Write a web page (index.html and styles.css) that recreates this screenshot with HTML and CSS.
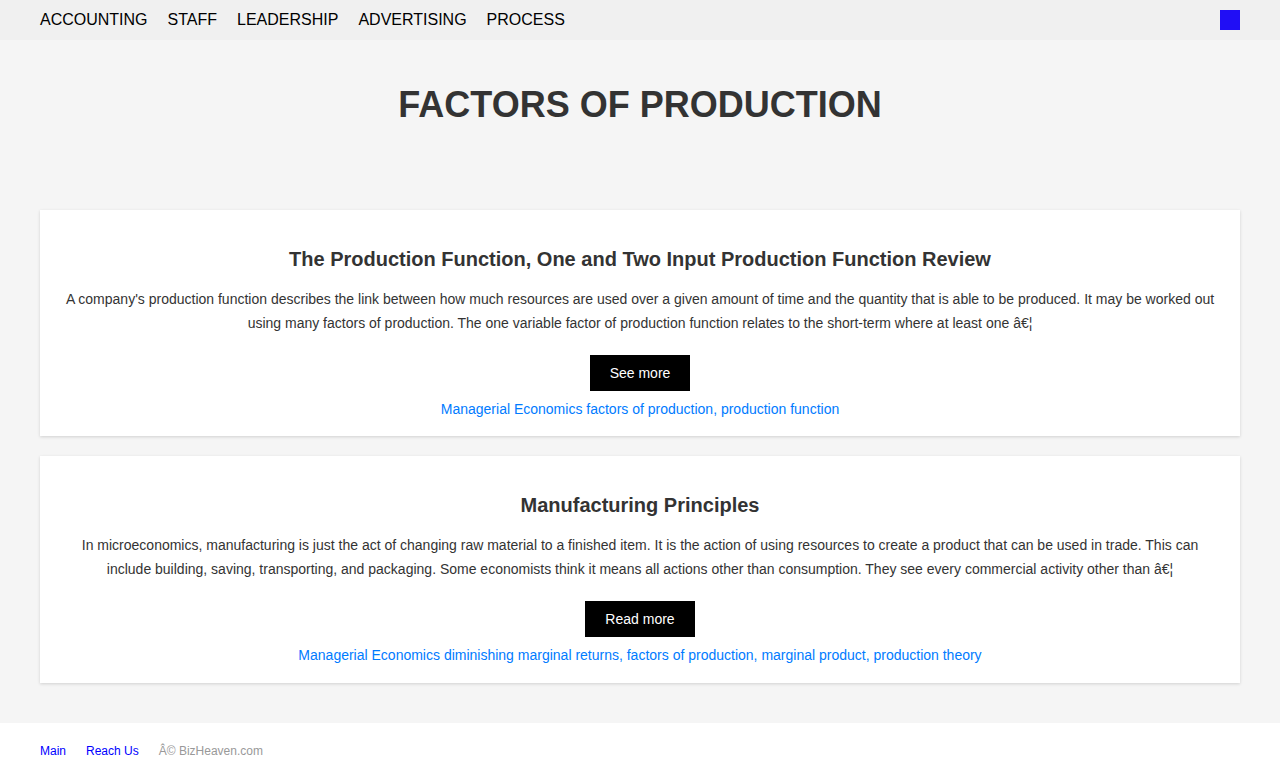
FILE: index.html
```html
<!DOCTYPE html>
<html>
<head>
<meta charset="utf-8">
<title>Factors of Production</title>
<link rel="stylesheet" href="styles.css">
</head>
<body>
<header class="topbar">
  <nav class="menu">
    <a href="#">ACCOUNTING</a>
    <a href="#">STAFF</a>
    <a href="#">LEADERSHIP</a>
    <a href="#">ADVERTISING</a>
    <a href="#">PROCESS</a>
  </nav>
  <span class="square"></span>
</header>
<main class="page">
  <h1 class="page-title">FACTORS OF PRODUCTION</h1>
  <section class="posts">
    <article class="card">
      <h2 class="card-title">The Production Function, One and Two Input Production Function Review</h2>
      <p class="card-text">A company's production function describes the link between how much resources are used over a given amount of time and the quantity that is able to be produced. It may be worked out using many factors of production. The one variable factor of production function relates to the short-term where at least one â€¦</p>
      <a class="btn" href="#">See more</a>
      <div class="tags"><a href="#">Managerial Economics</a> <a href="#">factors of production</a>, <a href="#">production function</a></div>
    </article>
    <article class="card">
      <h2 class="card-title">Manufacturing Principles</h2>
      <p class="card-text">In microeconomics, manufacturing is just the act of changing raw material to a finished item. It is the action of using resources to create a product that can be used in trade. This can include building, saving, transporting, and packaging. Some economists think it means all actions other than consumption. They see every commercial activity other than â€¦</p>
      <a class="btn" href="#">Read more</a>
      <div class="tags"><a href="#">Managerial Economics</a> <a href="#">diminishing marginal returns</a>, <a href="#">factors of production</a>, <a href="#">marginal product</a>, <a href="#">production theory</a></div>
    </article>
  </section>
</main>
<footer class="footer">
  <a href="#">Main</a>
  <a href="#">Reach Us</a>
  <span class="copy">Â© BizHeaven.com</span>
</footer>
</body>
</html>
```

FILE: styles.css
```css
* { box-sizing: border-box; }
html, body { margin: 0; padding: 0; }
body {
  font-family: "Liberation Sans", Arial, Helvetica, sans-serif;
  background: #f5f5f5;
  color: #333;
}
.topbar {
  height: 40px;
  background: #f0f0f0;
  display: flex;
  align-items: center;
  justify-content: space-between;
  padding: 0 40px;
}
.menu { display: flex; gap: 20px; }
.menu a {
  color: #000;
  text-decoration: none;
  font-size: 16px;
  line-height: 20px;
}
.square {
  width: 20px;
  height: 20px;
  background: #200ef5;
}
.page { padding: 0 40px 40px; }
.page-title {
  margin: 0;
  height: 170px;
  padding-top: 44px;
  font-size: 36px;
  line-height: 42px;
  font-weight: bold;
  text-align: center;
  color: #333;
}
.posts { display: flex; flex-direction: column; gap: 20px; }
.card {
  background: #fff;
  box-shadow: 0 1px 3px rgba(0,0,0,0.15);
  padding: 37px 24px 17px;
  text-align: center;
  display: flex;
  flex-direction: column;
  align-items: center;
}
.card + .card { padding-bottom: 18px; }
.card-title {
  margin: 0 0 16px;
  font-size: 20px;
  line-height: 24px;
  font-weight: bold;
  color: #333;
}
.card-text {
  margin: 0 0 20px;
  font-size: 14px;
  line-height: 24px;
  color: #333;
}
.btn {
  display: block;
  background: #000;
  color: #fff;
  text-decoration: none;
  font-size: 14px;
  line-height: 36px;
  height: 36px;
  padding: 0 20px;
}
.tags {
  margin-top: 8px;
  font-size: 14px;
  line-height: 20px;
  color: #007bff;
}
.tags a { color: #007bff; text-decoration: none; }
.footer {
  background: #fff;
  height: 54px;
  padding: 1px 40px 0;
  display: flex;
  align-items: center;
  gap: 20px;
  font-size: 12px;
}
.footer a { color: #0000ff; text-decoration: none; }
.footer .copy { color: #999; }
```
